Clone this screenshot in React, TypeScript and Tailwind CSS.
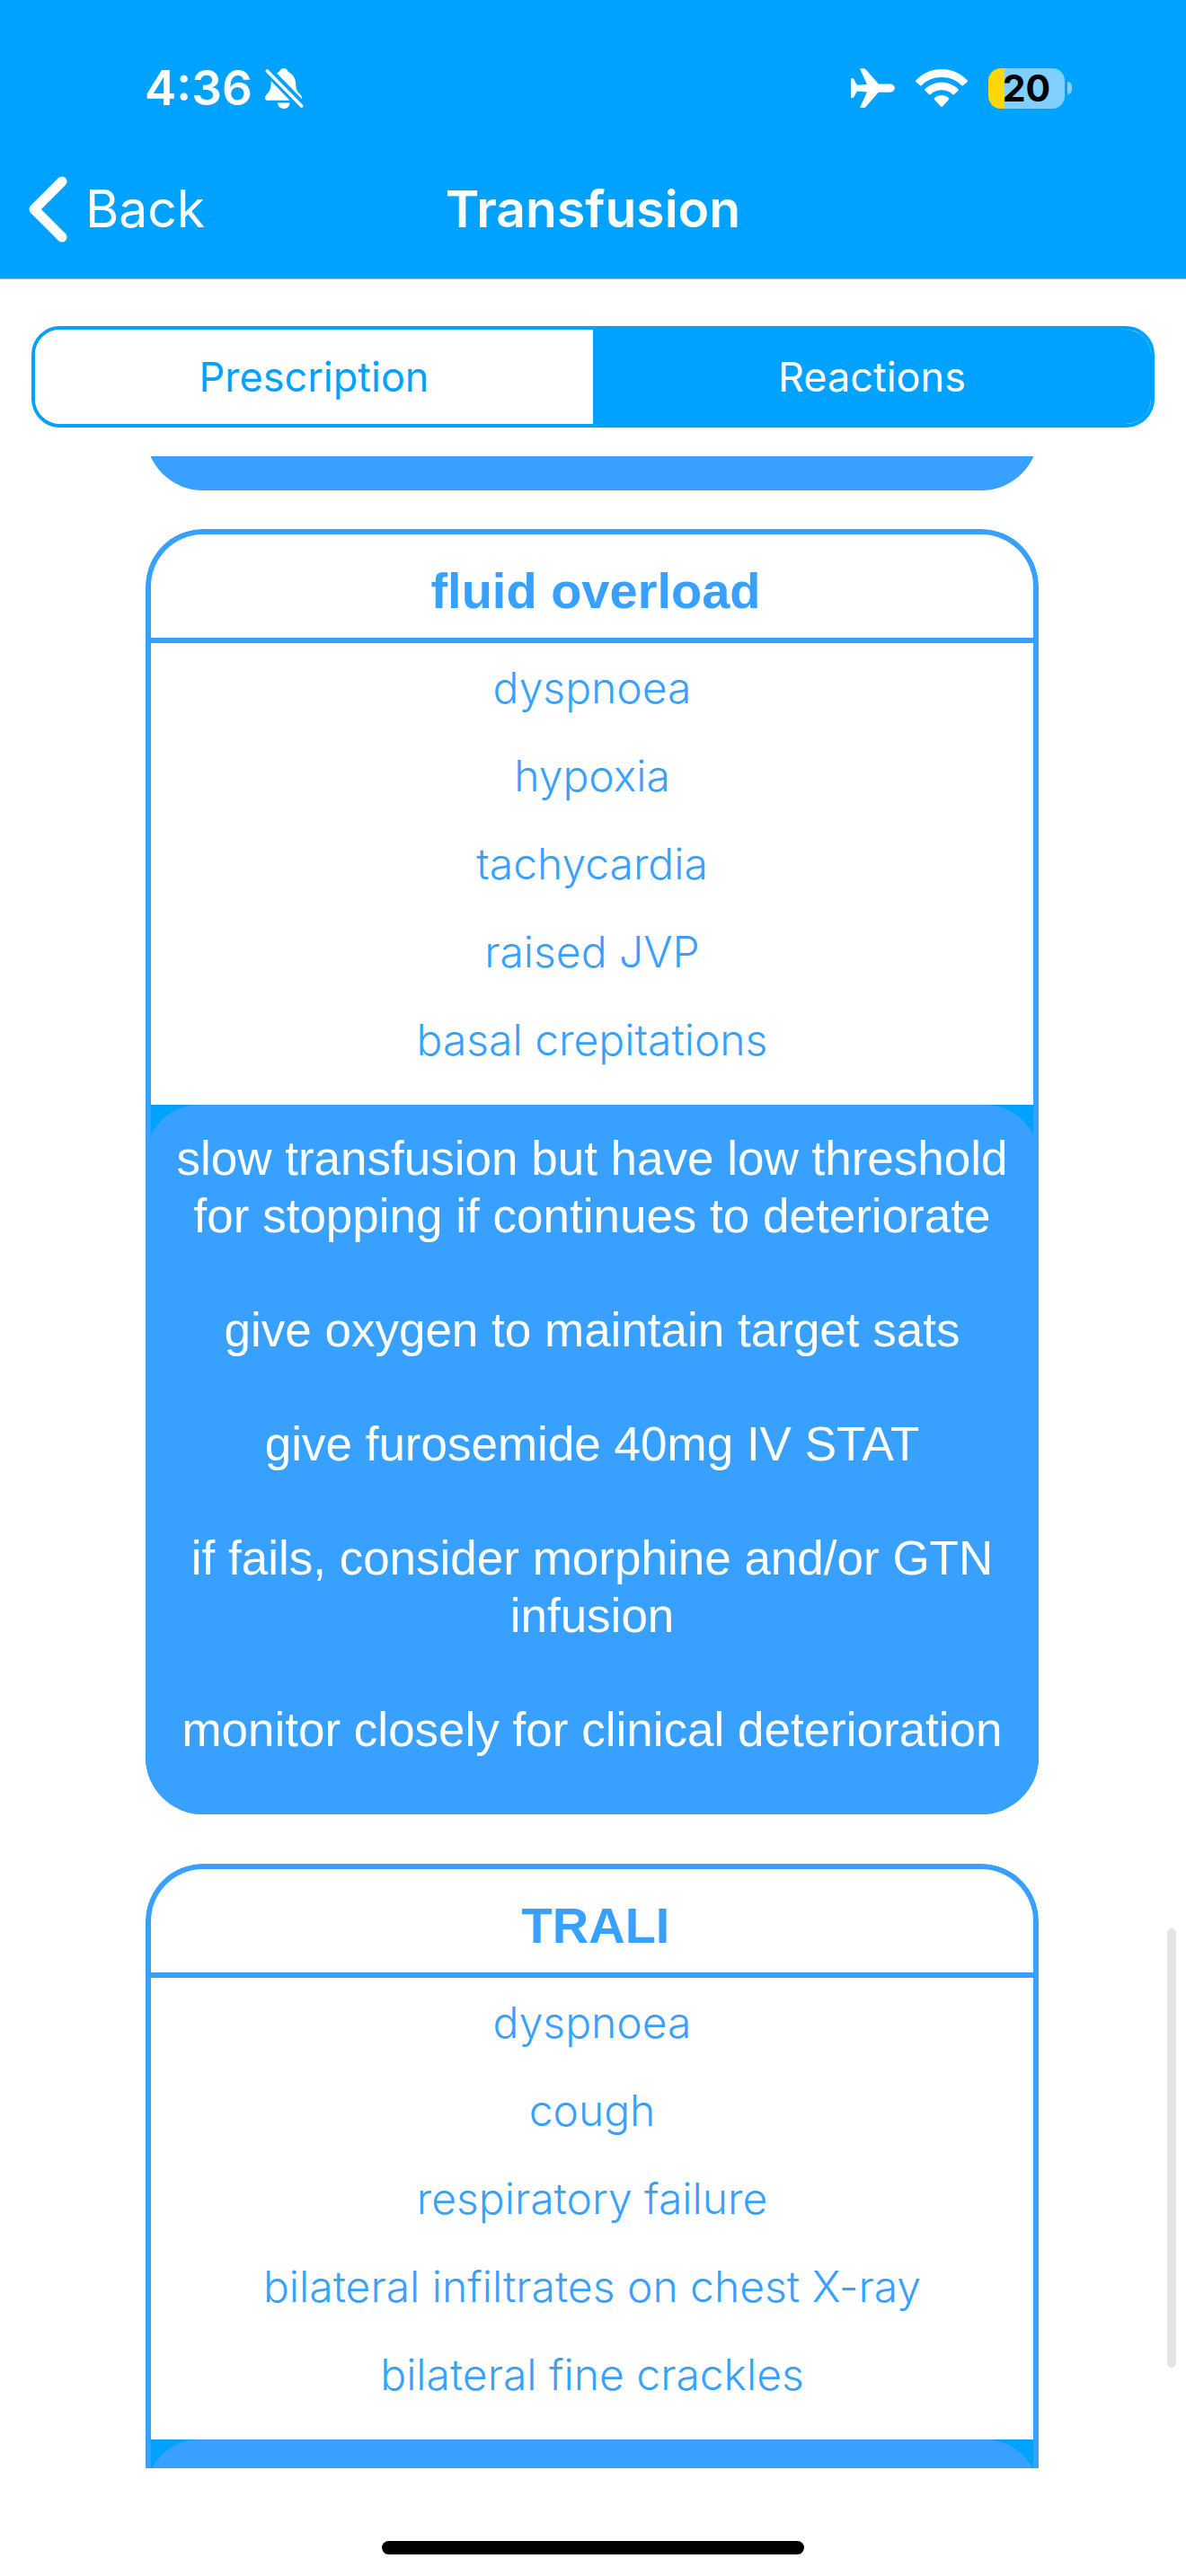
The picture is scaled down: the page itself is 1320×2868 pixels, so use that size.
import React, { useState } from "react";

type Reaction = { title: string; signs: string[]; actions: string[] };

const reactions: Reaction[] = [
  {
    title: "fluid overload",
    signs: ["dyspnoea", "hypoxia", "tachycardia", "raised JVP", "basal crepitations"],
    actions: [
      "slow transfusion but have low threshold for stopping if continues to deteriorate",
      "give oxygen to maintain target sats",
      "give furosemide 40mg IV STAT",
      "if fails, consider morphine and/or GTN infusion",
      "monitor closely for clinical deterioration",
    ],
  },
  {
    title: "TRALI",
    signs: [
      "dyspnoea",
      "cough",
      "respiratory failure",
      "bilateral infiltrates on chest X-ray",
      "bilateral fine crackles",
    ],
    actions: [],
  },
];

function BellSlash() {
  return (
    <svg className="h-[45px] w-[43px]" viewBox="0 0 43 45" fill="currentColor" aria-label="Silent mode">
      <path d="M13 5.6C14.4 4.4 15.6 4 16.2 3.2C17.2 1.2 18.8 0 20.8 0C22.8 0 24.4 1.2 25.4 3.2C26 4.2 27.4 4.6 29 6C32 8.800 34 12 34.200 17C34.400 22 35 24.500 37 27C39.500 29.500 41.500 31.500 41.300 34.500Z" />
      <path d="M6.800 14.300L27.500 35.800H3C1 35.800 0 34.700 0 33.200C0 30.500 2 29 4 26.800C6 24 6.800 20 6.800 14.300Z" />
      <path d="M14 38.600H27.600C27.300 42.400 24.500 45 20.800 45C17.100 45 14.300 42.400 14 38.600Z" />
      <path d="M2.400 3L40.600 42" stroke="currentColor" strokeWidth="3.600" strokeLinecap="round" />
    </svg>
  );
}

function Plane() {
  return (
    <svg className="h-[44px] w-[49px]" viewBox="0 0 49 44" fill="currentColor" aria-label="Airplane mode">
      <path d="M43.500 17.600C46.500 17.600 48.800 19.600 48.800 22.100C48.800 24.700 46.500 26.700 43.500 26.700H30.800L16.600 43C16 43.700 15.400 44 14.500 44H11C10.300 44 10.200 43.600 10.400 43L18 26.400L6.800 25.400L3.400 32C3 32.700 2.600 33 1.900 33H0.500C0.100 33 0 32.800 0 32.400V11.800C0 11.400 0.100 11.200 0.500 11.200H1.900C2.600 11.200 3 11.500 3.400 12.200L6.800 18.800L18 17.900L10.400 1.200C10.200 0.600 10.300 0.200 11 0.200H14.500C15.400 0.200 16 0.500 16.600 1.200L30.800 17.600Z" />
    </svg>
  );
}

function Wifi() {
  return (
    <svg className="h-[42px] w-[58px]" viewBox="0 0 58 42" fill="currentColor" aria-label="Wi-Fi">
      <path d="M0.600 12.200C8 4.500 17.800 0 29 0C40.200 0 50 4.500 57.400 12.200C58.100 13 58.100 13.700 57.500 14.300L53 18.100C52.400 18.600 51.800 18.500 51.200 17.900C45.200 12.200 37.600 9.100 29 9.100C20.400 9.100 12.800 12.200 6.800 17.900C6.200 18.500 5.600 18.600 5 18.100L0.500 14.300C-0.100 13.700 -0.100 13 0.600 12.200Z" />
      <path d="M10.800 22C15.600 17.400 21.900 14.800 29 14.800C36.100 14.800 42.400 17.400 47.200 22C47.900 22.700 47.900 23.400 47.300 24L43 28C42.400 28.500 41.800 28.500 41.200 27.900C37.900 24.900 33.700 23.300 29 23.300C24.300 23.300 20.100 24.900 16.800 27.900C16.200 28.500 15.600 28.500 15 28L10.700 24C10.100 23.400 10.100 22.700 10.800 22Z" />
      <path d="M21.300 31.900C23.300 30 26 28.900 29 28.900C32 28.900 34.700 30 36.700 31.900C37.500 32.600 37.400 33.400 36.800 34L30.200 41.300C29.400 42.100 28.600 42.100 27.800 41.300L21.200 34C20.600 33.400 20.500 32.600 21.300 31.900Z" />
    </svg>
  );
}

function Battery() {
  return (
    <div className="flex items-center gap-[3px]" aria-label="Battery 20 percent">
      <div className="flex h-[45px] w-[85px] items-center justify-center rounded-[14px] bg-[linear-gradient(to_right,#ffd60a_18px,#80d0ff_18px)] text-[41px] leading-[45px] font-bold text-black">
        20
      </div>
      <div className="h-[14px] w-[5px] rounded-r-full bg-[#80d0ff]" />
    </div>
  );
}

function ReactionCard({ title, signs, actions }: Reaction) {
  return (
    <article className="shrink-0 overflow-hidden rounded-[64px] text-center">
      <div className="rounded-t-[64px] border-x-[6px] border-t-[6px] border-[#38a1ff] text-[#38a1ff]">
        <h2 className="border-b-[6px] border-[#38a1ff] pt-[11px] pl-2 font-['Liberation_Sans',Arial,sans-serif] text-[56px] leading-[104px] font-bold">
          {title}
        </h2>
        <ul className="pt-px pb-[23px] font-['Inter',sans-serif] text-[48px] leading-[98px] font-light">
          {signs.map((sign) => (
            <li key={sign}>{sign}</li>
          ))}
        </ul>
      </div>
      <div className="border-x-[6px] border-[#38a1ff] bg-[#00a2ff]">
        <div className="-mx-[6px] flex flex-col gap-[63px] rounded-t-[60px] bg-[#38a1ff] px-5 pt-[28px] pb-[62px] font-['Liberation_Sans',Arial,sans-serif] text-[53px] leading-[64px] text-white">
          {actions.map((action) => (
            <p key={action}>{action}</p>
          ))}
        </div>
      </div>
    </article>
  );
}

export default function App() {
  const [tab, setTab] = useState("Reactions");
  return (
    <div className="flex h-screen flex-col overflow-hidden bg-white font-['Inter',sans-serif]">
      <header className="border-b border-[#a9bccb] bg-[#00a2ff] text-white">
        <div className="flex items-center justify-between pt-[74px] pr-[127px] pl-[161px]">
          <div className="flex items-center gap-[14px]">
            <span className="text-[53px] leading-[48px] font-semibold">4:36</span>
            <BellSlash />
          </div>
          <div className="flex items-center gap-[23px]">
            <Plane />
            <Wifi />
            <Battery />
          </div>
        </div>
        <nav className="grid grid-cols-[1fr_auto_1fr] items-center pt-[68px] pb-[34px] pl-[31px]">
          <button type="button" className="flex items-center gap-[20px] text-[57px] leading-[86px]">
            <svg className="h-[74px] w-[44px]" viewBox="0 0 44 74" fill="none" aria-hidden="true">
              <path d="M38 6L7 37L38 68" stroke="currentColor" strokeWidth="11" strokeLinecap="round" strokeLinejoin="round" />
            </svg>
            Back
          </button>
          <h1 className="pr-[31px] text-[57px] leading-[86px] font-semibold">Transfusion</h1>
        </nav>
      </header>

      <div className="px-[35px] pt-[52px] pb-[32px]">
        <div className="grid h-[113px] grid-cols-2 overflow-hidden rounded-[32px] border-4 border-[#00a2ff] text-[45px]">
          {["Prescription", "Reactions"].map((name) => (
            <button
              key={name}
              type="button"
              aria-pressed={tab === name}
              onClick={() => setTab(name)}
              className={tab === name ? "bg-[#00a2ff] text-white" : "bg-white text-[#00a2ff]"}
            >
              {name}
            </button>
          ))}
        </div>
      </div>

      <div className="relative flex min-h-0 flex-1 flex-col">
        <main className="flex min-h-0 flex-1 flex-col overflow-hidden pr-[164px] pl-[162px]">
          <div className="mb-[43px] flex h-[38px] shrink-0 items-end overflow-hidden">
            <div className="h-[128px] w-full shrink-0 rounded-b-[64px] bg-[#38a1ff]" />
          </div>
          <div className="flex flex-col gap-[55px]">
            {reactions.map((reaction) => (
              <ReactionCard key={reaction.title} {...reaction} />
            ))}
          </div>
        </main>
        <div className="absolute right-[11px] bottom-[112px] h-[489px] w-[10px] rounded-full bg-[#e4e4e4]" />
      </div>

      <footer className="flex h-[120px] shrink-0 items-end justify-center pb-6">
        <div className="h-[15px] w-[470px] rounded-full bg-black" />
      </footer>
    </div>
  );
}
